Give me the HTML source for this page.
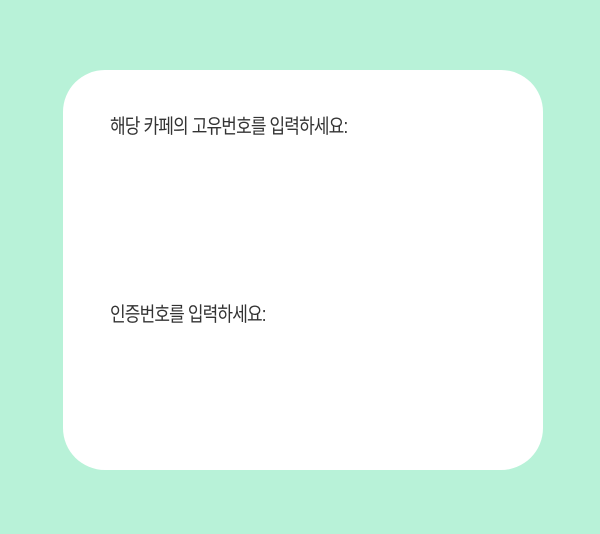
<!DOCTYPE html>
<html><head><meta charset="utf-8"><style>
html,body{margin:0;padding:0;}
body{width:600px;height:534px;background:#b8f2d8;position:relative;overflow:hidden;font-family:"Liberation Sans","Noto Sans CJK KR",sans-serif;}
.card{position:absolute;left:63px;top:70px;width:480px;height:400px;background:#fff;border-radius:42px;}
.t{position:absolute;left:110px;font-size:20px;line-height:20px;color:#333;letter-spacing:-1px;transform:scaleX(0.85);transform-origin:0 0;white-space:nowrap;}
</style></head><body>
<div class="card"></div>
<div class="t" style="top:117px">해당 카페의 고유번호를 입력하세요:</div>
<div class="t" style="top:305px">인증번호를 입력하세요:</div>
</body></html>
